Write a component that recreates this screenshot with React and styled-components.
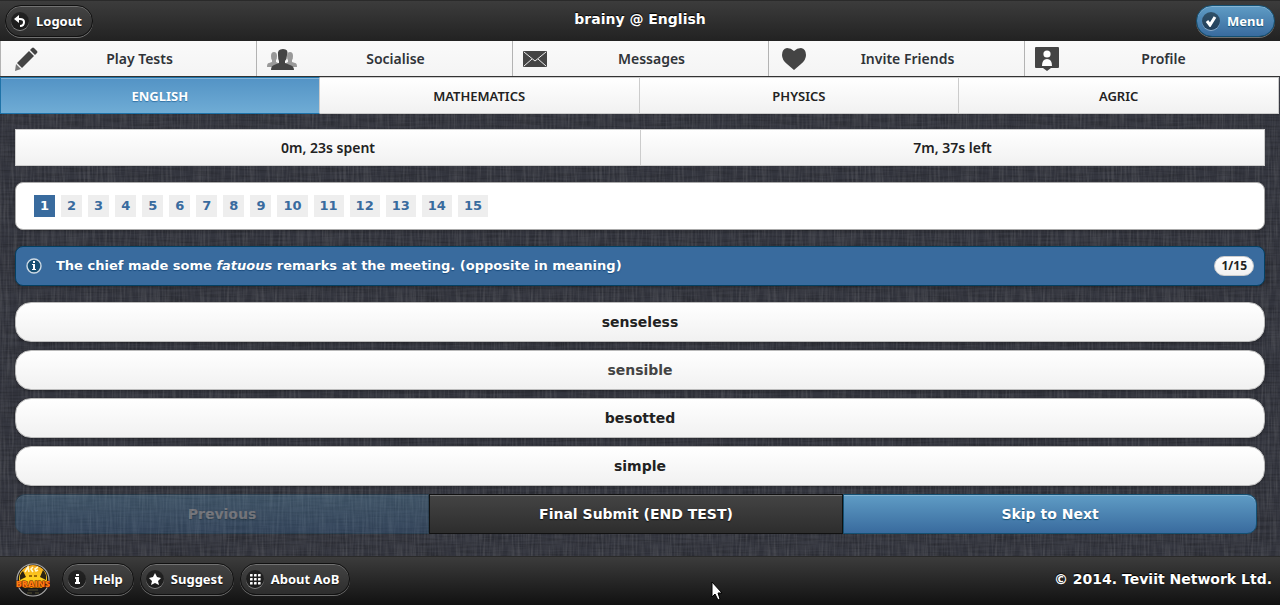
import React, { useState } from 'react';
import styled, { createGlobalStyle, css } from 'styled-components';

const weave = (frequency, seed, tint) => `
  <filter id='f' x='0' y='0' width='100%' height='100%' color-interpolation-filters='sRGB'>
    <feTurbulence type='fractalNoise' baseFrequency='${frequency}' numOctaves='2' seed='${seed}' stitchTiles='stitch'/>
    <feColorMatrix values='0 0 0 0 ${tint}  0 0 0 0 ${tint}  0 0 0 0 ${tint}  0.45 0 0 0 -0.17'/>
  </filter>
  <rect width='256' height='256' filter='url(#f)'/>
`;

const linen = (frequency, seed, tint) => `url("data:image/svg+xml,${encodeURIComponent(
  `<svg xmlns='http://www.w3.org/2000/svg' width='256' height='256'>${weave(frequency, seed, tint)}</svg>`
)}")`;

const GlobalStyle = createGlobalStyle`
  * {
    box-sizing: border-box;
  }
  body {
    margin: 0;
    background-color: #34363f;
    background-image: ${linen('0.5 0.03', 3, 0.6)}, ${linen('0.03 0.5', 8, 0)};
    font-family: 'Noto Sans', 'Open Sans', sans-serif;
    font-size: 14px;
    font-weight: 600;
    color: #222;
  }
  button {
    font: inherit;
    cursor: pointer;
  }
`;

const wideText = css`
  font-family: 'DejaVu Sans', 'Noto Sans', sans-serif;
  font-size: 14px;
  font-weight: 700;
`;

const Page = styled.div`
  display: flex;
  flex-direction: column;
  min-height: 100vh;
`;

const blue = css`
  color: #fff;
  text-shadow: 0 1px 1px #145072;
  border-color: #145072;
  background: linear-gradient(#5f9cc5, #396b9e);
`;

const Header = styled.header`
  display: grid;
  grid-template-columns: 1fr auto 1fr;
  align-items: center;
  height: 41px;
  padding: 0 5px;
  background: linear-gradient(#3c3c3c, #222);
  border-top: 1px solid #2a2a2a;
  color: #fff;
`;

const Title = styled.h1`
  margin: 0;
  padding-bottom: 4px;
  ${wideText}
  text-shadow: 0 -1px 1px #000;
`;

const PillButton = styled.button`
  display: inline-flex;
  align-items: center;
  gap: 7px;
  height: 32px;
  padding: 0 10px 0 5px;
  border: 1px solid #111;
  border-radius: 16px;
  background: linear-gradient(#444, #2d2d2d);
  box-shadow: inset 0 1px 0 rgba(255, 255, 255, 0.25), 0 1px 0 rgba(255, 255, 255, 0.35);
  color: #fff;
  font-size: 13px;
  font-weight: 700;
  text-shadow: 0 1px 1px #111;
  ${({ $primary }) => $primary && blue}
  ${({ $end }) => $end && 'justify-self: end;'}
`;

const Logout = styled(PillButton)`
  justify-self: start;
`;

const IconDisc = styled.span`
  display: flex;
  align-items: center;
  justify-content: center;
  width: 18px;
  height: 18px;
  border-radius: 50%;
  background: rgba(0, 0, 0, 0.45);
  box-shadow: 0 1px 0 rgba(255, 255, 255, 0.4);
`;

const NavBar = styled.nav`
  display: grid;
  grid-template-columns: repeat(5, 1fr);
  border-bottom: 1px solid #333;
`;

const NavLink = styled.a`
  display: grid;
  grid-template-columns: 30px 1fr;
  align-items: center;
  height: 35px;
  padding-left: 10px;
  padding-right: 18px;
  border-left: 1px solid #b3b3b3;
  background: linear-gradient(#fafafa, #f4f4f4);
  color: #2f3338;
  font-size: 14px;
  text-align: center;
  text-decoration: none;
`;

const Subjects = styled.div`
  display: grid;
  grid-template-columns: repeat(4, 1fr);
  padding-right: 1px;
`;

const Subject = styled.button`
  height: 37px;
  padding: 0;
  border: 1px solid #ccc;
  border-left-width: 0;
  background: linear-gradient(#fff, #f1f1f1);
  color: #222;
  font-size: 13px;
  ${({ $active }) => $active && css`
    border: 1px solid #1f73a8;
    border-right-color: #ccc;
    background: linear-gradient(#5393c5, #6facd5);
    box-shadow: inset 0 1px 0 rgba(255, 255, 255, 0.3);
    color: #fff;
    font-weight: 700;
    text-shadow: 0 1px 1px #3373a5;
  `}
`;

const Content = styled.main`
  display: flex;
  flex-direction: column;
  gap: 16px;
  padding: 15px 15px 22px;
`;

const Timer = styled.div`
  display: grid;
  grid-template-columns: 1fr 1fr;
  border: 1px solid #ccc;
`;

const Time = styled.div`
  height: 35px;
  line-height: 35px;
  text-align: center;
  font-size: 14px;
  background: linear-gradient(#fff, #f1f1f1);
  & + & {
    border-left: 1px solid #ccc;
  }
`;

const Pager = styled.nav`
  display: flex;
  flex-wrap: wrap;
  gap: 6px;
  padding: 12px 18px;
  border: 1px solid #aaa;
  border-radius: 8px;
  background: #fff;
  box-shadow: 0 1px 3px rgba(0, 0, 0, 0.3);
`;

const PageNumber = styled.button`
  height: 22px;
  min-width: 21px;
  padding: 0 6px;
  border: 0;
  background: ${({ $current }) => ($current ? '#396b9e' : '#eee')};
  color: ${({ $current }) => ($current ? '#fff' : '#396b9e')};
  ${wideText}
  font-size: 13px;
  line-height: 22px;
`;

const Question = styled.section`
  display: flex;
  align-items: center;
  gap: 14px;
  height: 40px;
  padding: 0 10px;
  border: 1px solid #044062;
  border-radius: 8px;
  background: #396b9e;
  color: #fff;
  box-shadow: 0 1px 3px rgba(0, 0, 0, 0.3);
`;

const QuestionText = styled.p`
  flex: 1;
  margin: 0;
  padding-bottom: 2px;
  ${wideText}
  font-size: 13px;
  text-shadow: 0 1px 1px #194b7e;
`;

const Count = styled.span`
  padding: 0 6px;
  border: 1px solid #ccc;
  border-radius: 10px;
  background: linear-gradient(#fff, #f1f1f1);
  color: #222;
  font-size: 12px;
  font-weight: 700;
  line-height: 18px;
`;

const Answers = styled.div`
  display: grid;
  gap: 8px;
`;

const Answer = styled.button`
  height: 40px;
  padding: 0;
  border: 1px solid #bbb;
  border-radius: 16px;
  background: linear-gradient(#fff, #f1f1f1);
  box-shadow: 0 1px 3px rgba(0, 0, 0, 0.3);
  color: ${({ $muted }) => ($muted ? '#444' : '#222')};
  ${wideText}
`;

const Actions = styled.div`
  display: grid;
  grid-template-columns: repeat(3, 1fr);
  margin-right: 8px;
`;

const Action = styled.button`
  height: 40px;
  padding: 0;
  border: 1px solid #111;
  background: linear-gradient(#444, #2d2d2d);
  box-shadow: inset 0 1px 0 rgba(255, 255, 255, 0.25);
  color: #fff;
  ${wideText}
  text-shadow: 0 1px 1px #111;
  ${({ $primary }) => $primary && blue}
  &:first-child {
    border-radius: 10px 0 0 10px;
  }
  &:last-child {
    border-radius: 0 10px 10px 0;
  }
  &:disabled {
    opacity: 0.3;
    cursor: default;
  }
`;

const Footer = styled.footer`
  display: flex;
  align-items: center;
  gap: 6px;
  height: 49px;
  margin-top: auto;
  padding: 0 8px 4px 16px;
  border-top: 1px solid #2a2a2a;
  background: linear-gradient(#3c3c3c, #111);
  color: #fff;
`;

const LogoLink = styled.a`
  display: flex;
  margin-right: 6px;
  padding-top: 2px;
`;

const Copyright = styled.span`
  margin-left: auto;
  ${wideText}
  text-shadow: 0 -1px 1px #000;
`;

const Pointer = styled.svg`
  position: fixed;
  left: 711px;
  top: 581px;
  pointer-events: none;
`;

const PencilIcon = () => (
  <svg width="30" height="26" viewBox="0 0 30 26">
    <path d="M6 17 18 5l5 5-12 12z" fill="#444" />
    <path d="m19 4 2-2q1-1 2 0l3 3q1 1 0 2l-2 2z" fill="#444" />
    <path d="m5 18 5 5-6 2z" fill="#777" />
  </svg>
);

const PeopleIcon = () => (
  <svg width="30" height="22" viewBox="0 0 30 22">
    <g fill="#999">
      <path d="M4 8q0-4 3-4t3 4q0 3-1 4v2l4 2v3H0q0-4 2-4l3-1v-2Q4 11 4 8z" />
      <path d="M20 8q0-4 3-4t3 4q0 3-1 4v2l3 1q2 0 2 4H17v-3l4-2v-2q-1-1-1-4z" />
    </g>
    <path d="M11 7q-1-6 5-6t4 6q0 4-2 6v2l5 2q4 1 4 5H4q0-4 3-5l5-2v-2q-1-2-1-6z" fill="#444" />
  </svg>
);

const MailIcon = () => (
  <svg width="24" height="16" viewBox="0 0 24 16">
    <rect width="24" height="16" rx="1" fill="#444" />
    <path d="m1 1 11 9L23 1M1 15l8-7m14 7-8-7" fill="none" stroke="#eee" />
  </svg>
);

const HeartIcon = () => (
  <svg width="30" height="22" viewBox="0 0 30 22">
    <path d="M15 3q3-3 7-3 5 1 5 7 0 5-5 9l-7 6-7-6Q3 12 3 7q0-6 5-7 4 0 7 3z" fill="#444" />
  </svg>
);

const ProfileIcon = () => (
  <svg width="24" height="26" viewBox="0 0 24 26">
    <path d="M1 1h22q1 0 1 1v19q0 1-1 1h-7l-4 3-4-3H1q-1 0-1-1V2q0-1 1-1z" fill="#444" />
    <circle cx="12" cy="8" r="3.6" fill="#fff" />
    <path d="M7 20q0-7 5-7t5 7z" fill="#fff" />
  </svg>
);

const BackIcon = () => (
  <svg width="12" height="12" viewBox="0 0 12 12">
    <path d="M3 4h3q4 0 4 3 0 4-4 4" fill="none" stroke="#fff" strokeWidth="2" />
    <path d="M5 0v8L0 4z" fill="#fff" />
  </svg>
);

const CheckIcon = () => (
  <svg width="12" height="12" viewBox="0 0 12 12">
    <path d="m2 6 3 4 5-8" fill="none" stroke="#fff" strokeWidth="3" />
  </svg>
);

const InfoIcon = () => (
  <svg width="12" height="12" viewBox="0 0 12 12">
    <path d="M5 1h3v2H5zM4 4h4v5h1v2H4V9h1V6H4z" fill="#fff" />
  </svg>
);

const StarIcon = () => (
  <svg width="12" height="12" viewBox="0 0 12 12">
    <path d="m6 0 2 4 4 1-3 3 1 4-4-2-4 2 1-4-3-3 4-1z" fill="#fff" />
  </svg>
);

const GridIcon = () => (
  <svg width="12" height="12" viewBox="0 0 12 12" fill="#fff">
    {[1, 5, 9].map(y => [1, 5, 9].map(x => (
      <rect key={`${x}-${y}`} x={x} y={y} width="2.6" height="2.6" rx="0.5" />
    )))}
  </svg>
);

const CircledInfo = () => (
  <svg width="16" height="16" viewBox="0 0 16 16">
    <circle cx="8" cy="8" r="7" fill="#174f73" stroke="#cfdbe5" strokeWidth="1.4" />
    <path d="M7 3h2v2H7zM6 6h3v5h1v1H6v-1h1V7H6z" fill="#fff" />
  </svg>
);

const Logo = () => (
  <svg width="34" height="34" viewBox="0 0 34 34" role="img" aria-label="Ace of Brains">
    <defs>
      <linearGradient id="sun" x2="0" y2="1">
        <stop offset="0" stopColor="#f4a51c" />
        <stop offset="0.6" stopColor="#ffd21f" />
        <stop offset="1" stopColor="#f29a00" />
      </linearGradient>
    </defs>
    <circle cx="17" cy="17" r="16" fill="#191919" stroke="#aaa" strokeWidth="1.2" />
    <path d="M3 19Q2 8 10 4q7-4 14 0 8 4 7 15l-5 6H8z" fill="url(#sun)" />
    <path d="M4 17q-1-6 3-9l3 6zM30 17q1-6-3-10l-3 7z" fill="#2b2413" />
    <path d="m9 9 3-5 1 5m4-5-2 2 2 3m5-5-3 2 1 2 2-1" fill="none" stroke="#fff8ce" strokeWidth="1.6" />
    <path d="M13 13h3m2 0h3" stroke="#7c4c00" strokeWidth="1.4" />
    <text
      x="17"
      y="24"
      textAnchor="middle"
      fontFamily="Open Sans, sans-serif"
      fontWeight="800"
      fontSize="9"
      fill="#ff7a12"
      stroke="#5e1800"
      strokeWidth="1"
      paintOrder="stroke"
    >
      BRAINS
    </text>
    <path d="M12 27h10M11 30h5m3 0h4" stroke="#555032" />
  </svg>
);

const navItems = [
  { label: 'Play Tests', Icon: PencilIcon },
  { label: 'Socialise', Icon: PeopleIcon },
  { label: 'Messages', Icon: MailIcon },
  { label: 'Invite Friends', Icon: HeartIcon },
  { label: 'Profile', Icon: ProfileIcon },
];
const subjects = ['ENGLISH', 'MATHEMATICS', 'PHYSICS', 'AGRIC'];
const answers = ['senseless', 'sensible', 'besotted', 'simple'];
const footerItems = [
  { label: 'Help', Icon: InfoIcon },
  { label: 'Suggest', Icon: StarIcon },
  { label: 'About AoB', Icon: GridIcon },
];

const App = () => {
  const [subject, setSubject] = useState(subjects[0]);
  const [current, setCurrent] = useState(1);

  return (
    <Page>
      <GlobalStyle />
      <Header>
        <Logout type="button"><IconDisc><BackIcon /></IconDisc>Logout</Logout>
        <Title>brainy @ English</Title>
        <PillButton type="button" $primary $end><IconDisc><CheckIcon /></IconDisc>Menu</PillButton>
      </Header>
      <NavBar>
        {navItems.map(({ label, Icon }) => (
          <NavLink key={label} href="#"><Icon /><span>{label}</span></NavLink>
        ))}
      </NavBar>
      <Subjects>
        {subjects.map(name => (
          <Subject key={name} type="button" $active={name === subject} onClick={() => setSubject(name)}>
            {name}
          </Subject>
        ))}
      </Subjects>
      <Content>
        <Timer>
          <Time>0m, 23s spent</Time>
          <Time>7m, 37s left</Time>
        </Timer>
        <Pager>
          {Array.from({ length: 15 }, (_, i) => i + 1).map(n => (
            <PageNumber key={n} type="button" $current={n === current} onClick={() => setCurrent(n)}>
              {n}
            </PageNumber>
          ))}
        </Pager>
        <Question>
          <CircledInfo />
          <QuestionText>
            The chief made some <em>fatuous</em> remarks at the meeting. (opposite in meaning)
          </QuestionText>
          <Count>{current}/15</Count>
        </Question>
        <Answers>
          {answers.map(answer => (
            <Answer key={answer} type="button" $muted={answer === 'sensible'}>{answer}</Answer>
          ))}
          <Actions>
            <Action type="button" $primary disabled={current === 1} onClick={() => setCurrent(current - 1)}>
              Previous
            </Action>
            <Action type="button">Final Submit (END TEST)</Action>
            <Action type="button" $primary onClick={() => setCurrent(Math.min(15, current + 1))}>
              Skip to Next
            </Action>
          </Actions>
        </Answers>
      </Content>
      <Footer>
        <LogoLink href="#"><Logo /></LogoLink>
        {footerItems.map(({ label, Icon }) => (
          <PillButton key={label} type="button"><IconDisc><Icon /></IconDisc>{label}</PillButton>
        ))}
        <Copyright>© 2014. Teviit Network Ltd.</Copyright>
      </Footer>
      <Pointer width="12" height="20" viewBox="0 0 12 20">
        <path d="M1 1v15l3-3 3 6 2-1-2-6h4z" fill="#fff" stroke="#000" />
      </Pointer>
    </Page>
  );
};

export default App;
